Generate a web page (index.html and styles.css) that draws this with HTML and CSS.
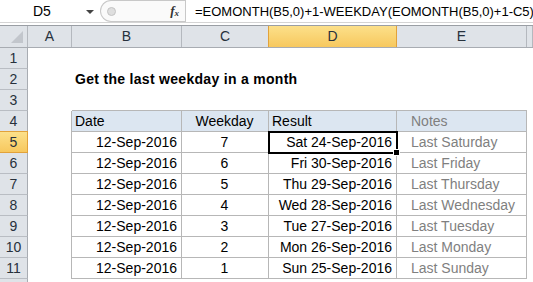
FILE: index.html
```html
<!DOCTYPE html>
<html lang="en">
<head>
    <meta charset="UTF-8">
    <title>Get the last weekday in a month</title>
    <link rel="stylesheet" href="styles.css">
</head>
<body>
    <div class="formula-bar">
        <div class="name-box">
            <span class="name">D5</span>
            <span class="drop"></span>
        </div>
        <div class="fx-box">
            <span class="dot"></span>
            <span class="fx">f<sub>x</sub></span>
        </div>
        <div class="formula">=EOMONTH(B5,0)+1-WEEKDAY(EOMONTH(B5,0)+1-C5)</div>
    </div>
    <div class="bar-sep"></div>

    <div class="sheet">
        <div class="row col-head">
            <div class="corner"><span class="tri"></span></div>
            <div class="ch">A</div>
            <div class="ch">B</div>
            <div class="ch">C</div>
            <div class="ch sel">D</div>
            <div class="ch">E</div>
            <div class="ch"></div>
        </div>

        <div class="row"><div class="rh">1</div></div>
        <div class="row">
            <div class="rh">2</div><div></div>
            <div class="title">Get the last weekday in a month</div>
        </div>
        <div class="row">
            <div class="rh">3</div><div></div>
            <div class="bb"></div><div class="bb"></div><div class="bb"></div><div class="bb"></div>
        </div>
        <div class="row">
            <div class="rh">4</div><div class="br"></div>
            <div class="cell hd">Date</div>
            <div class="cell hd center">Weekday</div>
            <div class="cell hd">Result</div>
            <div class="cell hd note">Notes</div>
        </div>
        <div class="row">
            <div class="rh sel">5</div><div class="br"></div>
            <div class="cell right">12-Sep-2016</div>
            <div class="cell center">7</div>
            <div class="cell right active">Sat 24-Sep-2016</div>
            <div class="cell note">Last Saturday</div>
        </div>
        <div class="row">
            <div class="rh">6</div><div class="br"></div>
            <div class="cell right">12-Sep-2016</div>
            <div class="cell center">6</div>
            <div class="cell right">Fri 30-Sep-2016</div>
            <div class="cell note">Last Friday</div>
        </div>
        <div class="row">
            <div class="rh">7</div><div class="br"></div>
            <div class="cell right">12-Sep-2016</div>
            <div class="cell center">5</div>
            <div class="cell right">Thu 29-Sep-2016</div>
            <div class="cell note">Last Thursday</div>
        </div>
        <div class="row">
            <div class="rh">8</div><div class="br"></div>
            <div class="cell right">12-Sep-2016</div>
            <div class="cell center">4</div>
            <div class="cell right">Wed 28-Sep-2016</div>
            <div class="cell note">Last Wednesday</div>
        </div>
        <div class="row">
            <div class="rh">9</div><div class="br"></div>
            <div class="cell right">12-Sep-2016</div>
            <div class="cell center">3</div>
            <div class="cell right">Tue 27-Sep-2016</div>
            <div class="cell note">Last Tuesday</div>
        </div>
        <div class="row">
            <div class="rh">10</div><div class="br"></div>
            <div class="cell right">12-Sep-2016</div>
            <div class="cell center">2</div>
            <div class="cell right">Mon 26-Sep-2016</div>
            <div class="cell note">Last Monday</div>
        </div>
        <div class="row">
            <div class="rh">11</div><div class="br"></div>
            <div class="cell right">12-Sep-2016</div>
            <div class="cell center">1</div>
            <div class="cell right">Sun 25-Sep-2016</div>
            <div class="cell note">Last Sunday</div>
        </div>
        <div class="row stub"><div class="rh"></div></div>
    </div>
</body>
</html>
```

FILE: styles.css
```css
body {
    margin: 0;
    background: #fff;
    font-family: "Liberation Sans Narrow", "Liberation Sans", sans-serif;
    font-size: 14px;
    color: #000;
    overflow: hidden;
    height: 282px;
}
.formula-bar {
    display: flex;
    height: 22px;
    align-items: stretch;
}
.name-box {
    width: 100px;
    flex-shrink: 0;
    display: flex;
    align-items: center;
    position: relative;
}
.name {
    margin-left: 33px;
}
.drop {
    position: absolute;
    left: 86px;
    top: 10px;
    border-left: 4px solid transparent;
    border-right: 4px solid transparent;
    border-top: 4px solid #444;
}
.fx-box {
    width: 85px;
    flex-shrink: 0;
    box-sizing: border-box;
    border: 1px solid #c8c8c8;
    border-right: none;
    border-radius: 11px 0 0 11px;
    background: #fafafa;
    display: flex;
    align-items: center;
    justify-content: space-between;
    padding: 0 6px 0 6px;
}
.dot {
    width: 7px;
    height: 7px;
    border-radius: 50%;
    background: #dedede;
    border: 1px solid #c4c4c4;
}
.fx {
    font-family: "Liberation Serif", serif;
    font-style: italic;
    font-weight: bold;
    font-size: 13px;
    color: #333;
}
.fx sub {
    font-size: 9px;
    vertical-align: -1px;
}
.formula {
    flex: 1;
    min-width: 0;
    border-left: 1px solid #c8c8c8;
    padding-left: 9px;
    display: flex;
    align-items: center;
    white-space: nowrap;
    font-size: 13px;
}
.bar-sep {
    height: 4px;
    box-sizing: border-box;
    border-top: 1px solid #d4d4d4;
    border-bottom: 1px solid #9a9ea4;
    background: #fff;
}
.row {
    display: grid;
    grid-template-columns: 28px 44px 110px 87px 128px 130px 1fr;
    height: 21px;
}
.row.stub {
    height: 4px;
}
.row > div {
    box-sizing: border-box;
}
.col-head {
    background: #dfe3e8;
    border-bottom: 1px solid #a8acb2;
}
.corner {
    border-right: 1px solid #b4b8be;
    position: relative;
}
.tri {
    position: absolute;
    right: 4px;
    bottom: 4px;
    border-left: 12px solid transparent;
    border-bottom: 12px solid #c2c6cc;
}
.ch {
    border-right: 1px solid #b4b8be;
    text-align: center;
    line-height: 20px;
    color: #27313c;
}
.ch.sel, .rh.sel {
    background: linear-gradient(#fce08a, #f7c85e);
    border-color: #e2a23a;
}
.ch.sel {
    border-left: 1px solid #e2a23a;
    margin-left: -1px;
}
.rh {
    background: #dfe3e8;
    border-right: 1px solid #a8acb2;
    border-bottom: 1px solid #b9bdc3;
    text-align: center;
    line-height: 20px;
    color: #27313c;
}
.rh.sel {
    border-bottom: 1px solid #e2a23a;
    border-top: 1px solid #e2a23a;
    margin-top: -1px;
    height: 22px;
    line-height: 21px;
}
.title {
    grid-column: 3 / 7;
    font-weight: bold;
    letter-spacing: 0.3px;
    padding-left: 3px;
    line-height: 21px;
}
.bb {
    border-bottom: 1px solid #b7b7b7;
}
.br {
    border-right: 1px solid #b7b7b7;
}
.cell {
    border-right: 1px solid #b7b7b7;
    border-bottom: 1px solid #b7b7b7;
    line-height: 20px;
    padding: 0 4px 0 3px;
    white-space: nowrap;
}
.hd {
    background: #dce6f1;
}
.center {
    text-align: center;
}
.right {
    text-align: right;
}
.note {
    color: #7f7f7f;
    padding-left: 14px;
}
.active {
    position: relative;
    outline: 2px solid #000;
    outline-offset: -1px;
}
.active::after {
    content: "";
    position: absolute;
    right: -4px;
    bottom: -4px;
    width: 5px;
    height: 5px;
    background: #000;
    border: 1px solid #fff;
}
```
